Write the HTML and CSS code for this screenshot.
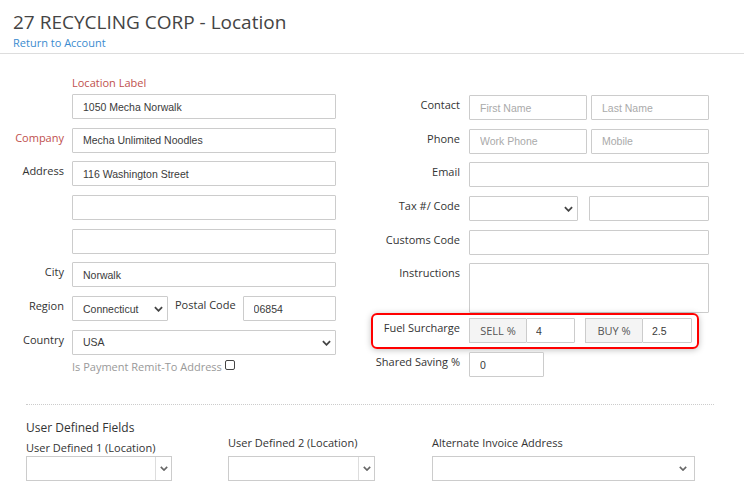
FILE: index.html
```html
<!DOCTYPE html>
<html lang="en">
<head>
  <meta charset="UTF-8" />
  <meta name="viewport" content="width=device-width, initial-scale=1.0" />
  <title>27 RECYCLING CORP - Location</title>
  <link rel="stylesheet" href="styles.css">
</head>

<body>
  <header class="page-header">
    <h1>27 RECYCLING CORP - Location</h1>
    <a class="back-link" href="#">Return to Account</a>
  </header>

  <main class="location-form">
    <section class="col-left">
      <div class="top-label required">Location Label</div>

      <div class="field-grid left-grid">
        <span class="label"></span>
        <input type="text" value="1050 Mecha Norwalk" />

        <span class="label required">Company</span>
        <input type="text" value="Mecha Unlimited Noodles" />

        <span class="label">Address</span>
        <input type="text" value="116 Washington Street" />

        <span class="label"></span>
        <input type="text" />

        <span class="label"></span>
        <input type="text" />

        <span class="label">City</span>
        <input type="text" value="Norwalk" />

        <span class="label">Region</span>
        <div class="inline-row">
          <div class="select-wrap region-select">
            <select><option>Connecticut</option></select>
            <svg class="chevron" viewBox="0 0 10 6" width="9" height="6"><polyline points="1,1 5,5 9,1" /></svg>
          </div>
          <span class="label inline-label">Postal Code</span>
          <input type="text" class="postal" value="06854" />
        </div>

        <span class="label">Country</span>
        <div class="select-wrap">
          <select><option>USA</option></select>
          <svg class="chevron" viewBox="0 0 10 6" width="9" height="6"><polyline points="1,1 5,5 9,1" /></svg>
        </div>

        <span class="label"></span>
        <label class="remit">
          Is Payment Remit-To Address
          <input type="checkbox" />
        </label>
      </div>
    </section>

    <section class="col-right">
      <div class="field-grid right-grid">
        <span class="label">Contact</span>
        <div class="pair">
          <input type="text" placeholder="First Name" />
          <input type="text" placeholder="Last Name" />
        </div>

        <span class="label">Phone</span>
        <div class="pair">
          <input type="text" placeholder="Work Phone" />
          <input type="text" placeholder="Mobile" />
        </div>

        <span class="label">Email</span>
        <input type="text" />

        <span class="label">Tax #/ Code</span>
        <div class="tax-row">
          <div class="select-wrap tax-select">
            <select><option></option></select>
            <svg class="chevron" viewBox="0 0 10 6" width="9" height="6"><polyline points="1,1 5,5 9,1" /></svg>
          </div>
          <input type="text" />
        </div>

        <span class="label">Customs Code</span>
        <input type="text" />

        <span class="label">Instructions</span>
        <textarea></textarea>

        <div class="fuel-row">
          <span class="label fuel-label">Fuel Surcharge</span>
          <div class="input-group">
            <span class="addon">SELL %</span>
            <input type="text" value="4" />
          </div>
          <div class="input-group buy">
            <span class="addon">BUY %</span>
            <input type="text" value="2.5" />
          </div>
        </div>

        <span class="label">Shared Saving %</span>
        <div class="short-field">
          <input type="text" value="0" />
        </div>
      </div>
    </section>
  </main>

  <section class="udf">
    <h2>User Defined Fields</h2>
    <div class="udf-row">
      <div class="udf-col udf-first">
        <span class="udf-label">User Defined 1 (Location)</span>
        <div class="split-select">
          <select><option></option></select>
          <span class="caret"><svg viewBox="0 0 10 6" width="8" height="5"><polyline points="1,1 5,5 9,1" /></svg></span>
        </div>
      </div>

      <div class="udf-col udf-second">
        <span class="udf-label">User Defined 2 (Location)</span>
        <div class="split-select">
          <select><option></option></select>
          <span class="caret"><svg viewBox="0 0 10 6" width="8" height="5"><polyline points="1,1 5,5 9,1" /></svg></span>
        </div>
      </div>

      <div class="udf-col udf-third">
        <span class="udf-label">Alternate Invoice Address</span>
        <div class="split-select plain">
          <select><option></option></select>
          <span class="caret"><svg viewBox="0 0 10 6" width="8" height="5"><polyline points="1,1 5,5 9,1" /></svg></span>
        </div>
      </div>
    </div>
  </section>
</body>
</html>
```

FILE: styles.css
```css
* {
  box-sizing: border-box;
}

body {
  margin: 0;
  background: #fff;
  color: #333;
  font-family: "Open Sans", Arial, sans-serif;
  font-size: 11px;
}

.page-header {
  padding: 9px 13px 2px;
  border-bottom: 1px solid #ddd;
}

h1 {
  margin: 0;
  font-size: 19px;
  font-weight: 400;
  line-height: 26px;
  color: #444;
}

.back-link {
  display: block;
  line-height: 16px;
  color: #3b8bcf;
  text-decoration: none;
}

.location-form {
  display: flex;
  align-items: flex-start;
  padding-top: 21px;
}

.col-left {
  width: 336px;
}

.col-right {
  margin-left: 24px;
  padding-top: 20px;
}

.top-label {
  margin: 0 0 3px 72px;
  line-height: 16px;
}

.required {
  color: #c0504d;
}

.field-grid {
  display: grid;
  row-gap: 8.7px;
  align-items: start;
}

.left-grid {
  grid-template-columns: 64px 264px;
  column-gap: 8px;
}

.right-grid {
  grid-template-columns: 100px 240px;
  column-gap: 9px;
}

.label {
  padding-top: 1px;
  line-height: 17px;
  text-align: right;
  white-space: nowrap;
}

input[type="text"],
select,
textarea {
  width: 100%;
  height: 25px;
  margin: 0;
  padding: 0 10px;
  border: 1px solid #ccc;
  border-radius: 1px;
  background: #fff;
  font-family: "Liberation Sans", Arial, sans-serif;
  font-size: 10.5px;
  color: #3a3a3a;
}

input::placeholder {
  color: #aaa;
}

textarea {
  height: 50px;
  resize: none;
}

select {
  appearance: none;
  padding-right: 20px;
}

.select-wrap {
  position: relative;
}

.chevron {
  position: absolute;
  right: 5px;
  top: 10px;
  fill: none;
  stroke: #444;
  stroke-width: 2;
}

.inline-row {
  display: flex;
}

.region-select {
  width: 96px;
  flex: none;
}

.inline-label {
  margin: 0 7px 0 7px;
  padding-top: 0;
}

.postal {
  flex: 1;
}

.remit {
  margin-top: -5.6px;
  line-height: 17px;
  color: #999;
}

.remit input {
  appearance: none;
  width: 10px;
  height: 10px;
  margin: 0;
  border: 1px solid #444;
  border-radius: 2px;
  vertical-align: 1px;
}

.pair {
  display: flex;
  gap: 4px;
}

.tax-row {
  display: flex;
  gap: 11px;
}

.tax-select {
  width: 109px;
  flex: none;
}

.fuel-row {
  grid-column: 1 / -1;
  display: flex;
  align-items: flex-start;
  margin: -8.7px 10px -5.7px 11px;
  padding: 3px 5px 4px 0;
  border: 2px solid #f00;
  border-radius: 6px;
  box-shadow: 0 1px 6px rgba(0, 0, 0, 0.25);
}

.fuel-label {
  width: 87px;
  margin-right: 9px;
}

.input-group {
  display: flex;
  width: 106px;
}

.input-group.buy {
  width: 107px;
  margin-left: 10px;
}

.addon {
  flex: none;
  width: 57px;
  height: 25px;
  line-height: 23px;
  border: 1px solid #ccc;
  border-right: none;
  background: #f4f4f4;
  color: #555;
  text-align: center;
}

.input-group input {
  padding-left: 9px;
}

.short-field {
  width: 75px;
}

.udf {
  margin: 27px 30px 0 26px;
  padding-top: 14px;
  border-top: 1px dotted #ccc;
}

h2 {
  margin: 0 0 4px;
  font-size: 12px;
  font-weight: 400;
  line-height: 17px;
  color: #333;
}

.udf-row {
  display: flex;
  align-items: flex-end;
  margin-top: -21px;
}

.udf-col {
  display: flex;
  flex-direction: column;
}

.udf-first {
  width: 146px;
  padding-top: 21px;
}

.udf-second {
  width: 147px;
  margin-left: 56px;
}

.udf-third {
  width: 263px;
  margin-left: 57px;
}

.udf-label {
  line-height: 16px;
  margin-bottom: 5px;
}

.udf-first .udf-label {
  margin-bottom: 0;
}

.split-select {
  display: flex;
  height: 25px;
  border: 1px solid #ccc;
}

.split-select select {
  height: 23px;
  border: none;
}

.caret {
  flex: none;
  display: flex;
  align-items: center;
  justify-content: center;
  width: 16px;
  border-left: 1px solid #ddd;
}

.split-select.plain .caret {
  width: 22px;
  border-left: none;
}

.caret svg {
  fill: none;
  stroke: #666;
  stroke-width: 2;
}
```
